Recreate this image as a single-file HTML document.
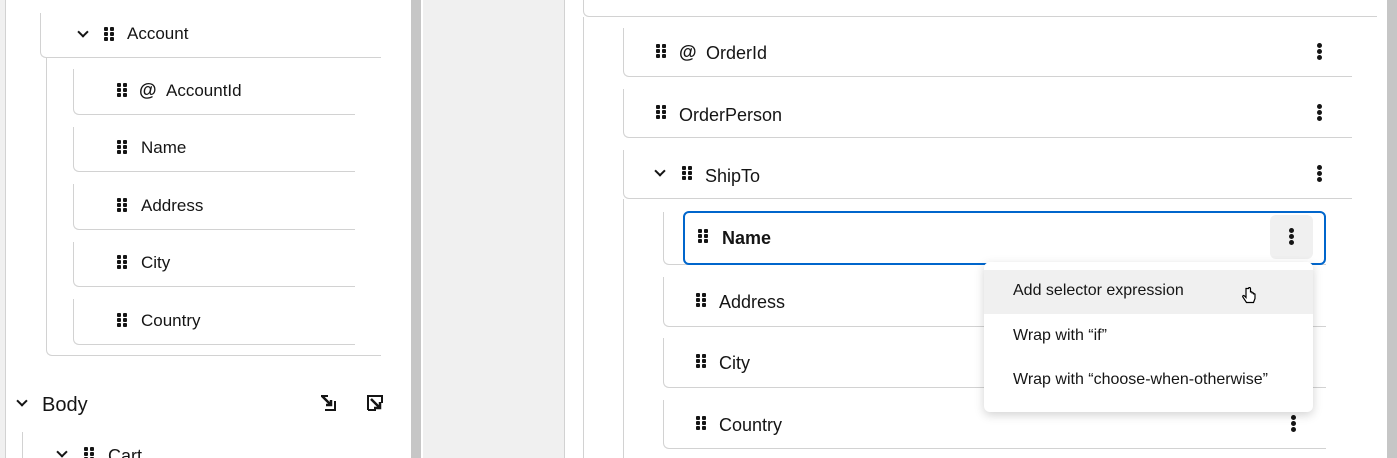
<!DOCTYPE html>
<html style="width:1397px;height:458px;overflow:hidden"><head><meta charset="utf-8"><style>
*{margin:0;padding:0;box-sizing:border-box}
body{width:1397px;height:458px;overflow:hidden;background:#fff;font-family:"Liberation Sans",sans-serif;color:#151515;position:relative}
.a{position:absolute}
.row{position:absolute;border-left:1px solid #d2d2d2;border-bottom:1px solid #d2d2d2;border-bottom-left-radius:6px}
.vl{position:absolute;width:1px;background:#d2d2d2}
.t{position:absolute;font-size:18px;line-height:20px;white-space:nowrap}
.g{position:absolute;width:10px;height:14px}
.g i{position:absolute;width:4px;height:4px;background:#151515;border-radius:1px}
.k{position:absolute;width:5px;height:17px}
.k i{position:absolute;left:0;width:5px;height:5px;border-radius:50%;background:#151515}
.chev{position:absolute;width:8px;height:8px;border-right:2.5px solid #151515;border-bottom:2.5px solid #151515;transform:rotate(45deg)}
.at{position:absolute;font-size:18px;font-weight:bold;line-height:20px}
</style></head><body>
<div class="a" style="left:0;top:0;width:6px;height:458px;background:#f0f0f0;border-right:1px solid #d2d2d2"></div>
<div class="a" style="left:411px;top:0;width:10px;height:458px;background:#c6c6c6"></div>
<div class="a" style="left:423px;top:0;width:142px;height:458px;background:#f0f0f0;border-right:1px solid #d2d2d2"></div>

<div class="row" style="left:40px;top:13px;width:341px;height:45px"></div>
<div class="chev" style="left:79px;top:28px"></div>
<div class="g" style="left:104px;top:27px"><i style="left:0;top:0"></i><i style="left:6px;top:0"></i><i style="left:0;top:5px"></i><i style="left:6px;top:5px"></i><i style="left:0;top:10px"></i><i style="left:6px;top:10px"></i></div>
<div class="t" style="left:127px;top:24px;font-size:17px">Account</div>
<div class="row" style="left:46px;top:58px;width:335px;height:298px"></div>

<div class="row" style="left:73px;top:69px;width:282px;height:46px"></div>
<div class="row" style="left:73px;top:127px;width:282px;height:45px"></div>
<div class="row" style="left:73px;top:184px;width:282px;height:46px"></div>
<div class="row" style="left:73px;top:242px;width:282px;height:45px"></div>
<div class="row" style="left:73px;top:299px;width:282px;height:46px"></div>

<div class="g" style="left:117px;top:83px"><i style="left:0;top:0"></i><i style="left:6px;top:0"></i><i style="left:0;top:5px"></i><i style="left:6px;top:5px"></i><i style="left:0;top:10px"></i><i style="left:6px;top:10px"></i></div>
<div class="at" style="left:139px;top:80px">@</div>
<div class="t" style="left:166px;top:81px;font-size:17px">AccountId</div>
<div class="g" style="left:117px;top:140px"><i style="left:0;top:0"></i><i style="left:6px;top:0"></i><i style="left:0;top:5px"></i><i style="left:6px;top:5px"></i><i style="left:0;top:10px"></i><i style="left:6px;top:10px"></i></div>
<div class="t" style="left:141px;top:138px;font-size:17px">Name</div>
<div class="g" style="left:117px;top:198px"><i style="left:0;top:0"></i><i style="left:6px;top:0"></i><i style="left:0;top:5px"></i><i style="left:6px;top:5px"></i><i style="left:0;top:10px"></i><i style="left:6px;top:10px"></i></div>
<div class="t" style="left:141px;top:196px;font-size:17px">Address</div>
<div class="g" style="left:117px;top:255px"><i style="left:0;top:0"></i><i style="left:6px;top:0"></i><i style="left:0;top:5px"></i><i style="left:6px;top:5px"></i><i style="left:0;top:10px"></i><i style="left:6px;top:10px"></i></div>
<div class="t" style="left:141px;top:253px;font-size:17px">City</div>
<div class="g" style="left:117px;top:313px"><i style="left:0;top:0"></i><i style="left:6px;top:0"></i><i style="left:0;top:5px"></i><i style="left:6px;top:5px"></i><i style="left:0;top:10px"></i><i style="left:6px;top:10px"></i></div>
<div class="t" style="left:141px;top:311px;font-size:17px">Country</div>

<div class="chev" style="left:18px;top:397px"></div>
<div class="t" style="left:42px;top:394px;font-size:20px;line-height:22px">Body</div>
<svg class="a" style="left:320px;top:394px" width="18" height="18" viewBox="0 0 18 18"><path d="M8 2H2v1M15 7v9H5" fill="none" stroke="#151515" stroke-width="2"/><path d="M2 2l9 9M11 6v5H6" fill="none" stroke="#151515" stroke-width="2.5"/></svg>
<svg class="a" style="left:366px;top:394px" width="18" height="18" viewBox="0 0 18 18"><path d="M2 16V2h14v7M10 16H2" fill="none" stroke="#151515" stroke-width="2"/><path d="M5 5l9 9M14 8v6H8" fill="none" stroke="#151515" stroke-width="2.5"/></svg>
<div class="vl" style="left:22px;top:432px;height:26px"></div>
<div class="chev" style="left:58px;top:448px"></div>
<div class="g" style="left:84px;top:447px"><i style="left:0;top:0"></i><i style="left:6px;top:0"></i><i style="left:0;top:5px"></i><i style="left:6px;top:5px"></i><i style="left:0;top:10px"></i><i style="left:6px;top:10px"></i></div>
<div class="t" style="left:108px;top:446px;font-size:18px">Cart</div>

<div class="row" style="left:583px;top:-20px;width:794px;height:37px"></div>
<div class="vl" style="left:583px;top:17px;height:441px"></div>
<div class="a" style="left:1387px;top:0;width:10px;height:458px;background:#c6c6c6"></div>

<div class="row" style="left:623px;top:28px;width:729px;height:49px"></div>
<div class="row" style="left:623px;top:89px;width:729px;height:49px"></div>
<div class="row" style="left:623px;top:150px;width:729px;height:49px"></div>
<div class="vl" style="left:623px;top:199px;height:259px"></div>

<div class="g" style="left:656px;top:44px"><i style="left:0;top:0"></i><i style="left:6px;top:0"></i><i style="left:0;top:5px"></i><i style="left:6px;top:5px"></i><i style="left:0;top:10px"></i><i style="left:6px;top:10px"></i></div>
<div class="at" style="left:679px;top:42px">@</div>
<div class="t" style="left:706px;top:43px">OrderId</div>
<div class="k" style="left:1317px;top:43px"><i style="top:0"></i><i style="top:6px"></i><i style="top:12px"></i></div>

<div class="g" style="left:656px;top:105px"><i style="left:0;top:0"></i><i style="left:6px;top:0"></i><i style="left:0;top:5px"></i><i style="left:6px;top:5px"></i><i style="left:0;top:10px"></i><i style="left:6px;top:10px"></i></div>
<div class="t" style="left:679px;top:105px">OrderPerson</div>
<div class="k" style="left:1317px;top:104px"><i style="top:0"></i><i style="top:6px"></i><i style="top:12px"></i></div>

<div class="chev" style="left:656px;top:167px"></div>
<div class="g" style="left:682px;top:166px"><i style="left:0;top:0"></i><i style="left:6px;top:0"></i><i style="left:0;top:5px"></i><i style="left:6px;top:5px"></i><i style="left:0;top:10px"></i><i style="left:6px;top:10px"></i></div>
<div class="t" style="left:705px;top:166px">ShipTo</div>
<div class="k" style="left:1317px;top:165px"><i style="top:0"></i><i style="top:6px"></i><i style="top:12px"></i></div>

<div class="row" style="left:663px;top:212px;width:663px;height:53px"></div>
<div class="row" style="left:663px;top:277px;width:663px;height:50px"></div>
<div class="row" style="left:663px;top:338px;width:663px;height:50px"></div>
<div class="row" style="left:663px;top:400px;width:663px;height:49px"></div>

<div class="a" style="left:683px;top:211px;width:643px;height:54px;border:2px solid #0066cc;border-radius:6px;background:#fff"></div>
<div class="a" style="left:1270px;top:215px;width:43px;height:44px;background:#f0f0f0;border-radius:6px"></div>
<div class="k" style="left:1289px;top:228px"><i style="top:0"></i><i style="top:6px"></i><i style="top:12px"></i></div>
<div class="g" style="left:698px;top:229px"><i style="left:0;top:0"></i><i style="left:6px;top:0"></i><i style="left:0;top:5px"></i><i style="left:6px;top:5px"></i><i style="left:0;top:10px"></i><i style="left:6px;top:10px"></i></div>
<div class="t" style="left:722px;top:228px;font-weight:bold">Name</div>

<div class="g" style="left:696px;top:293px"><i style="left:0;top:0"></i><i style="left:6px;top:0"></i><i style="left:0;top:5px"></i><i style="left:6px;top:5px"></i><i style="left:0;top:10px"></i><i style="left:6px;top:10px"></i></div>
<div class="t" style="left:719px;top:292px">Address</div>
<div class="g" style="left:696px;top:354px"><i style="left:0;top:0"></i><i style="left:6px;top:0"></i><i style="left:0;top:5px"></i><i style="left:6px;top:5px"></i><i style="left:0;top:10px"></i><i style="left:6px;top:10px"></i></div>
<div class="t" style="left:719px;top:353px">City</div>
<div class="g" style="left:696px;top:416px"><i style="left:0;top:0"></i><i style="left:6px;top:0"></i><i style="left:0;top:5px"></i><i style="left:6px;top:5px"></i><i style="left:0;top:10px"></i><i style="left:6px;top:10px"></i></div>
<div class="t" style="left:719px;top:415px">Country</div>
<div class="k" style="left:1291px;top:415px"><i style="top:0"></i><i style="top:6px"></i><i style="top:12px"></i></div>

<div class="a" style="left:984px;top:262px;width:329px;height:150px;background:#fff;border-radius:6px;box-shadow:0 3px 10px rgba(0,0,0,0.18)"></div>
<div class="a" style="left:984px;top:270px;width:329px;height:44px;background:#f0f0f0"></div>
<div class="t" style="left:1013px;top:281px;font-size:16px">Add selector expression</div>
<div class="t" style="left:1013px;top:326px;font-size:16px">Wrap with “if”</div>
<div class="t" style="left:1013px;top:370px;font-size:16px">Wrap with “choose-when-otherwise”</div>
<svg class="a" style="left:1242px;top:287px" width="16" height="18" viewBox="0 0 16 18"><path d="M4 1.5v9l-1.5-1.5c-1-1-2.5 0-1.5 1.2l3.5 5.3h7l1.5-4v-4c0-1-1.5-1-1.5 0v-1c0-1-1.5-1-1.5 0v-1c0-1-1.5-1-1.5 0v-4c0-1.3-2-1.3-2 0z" fill="#fff" stroke="#000" stroke-width="1.2"/></svg>
</body></html>
